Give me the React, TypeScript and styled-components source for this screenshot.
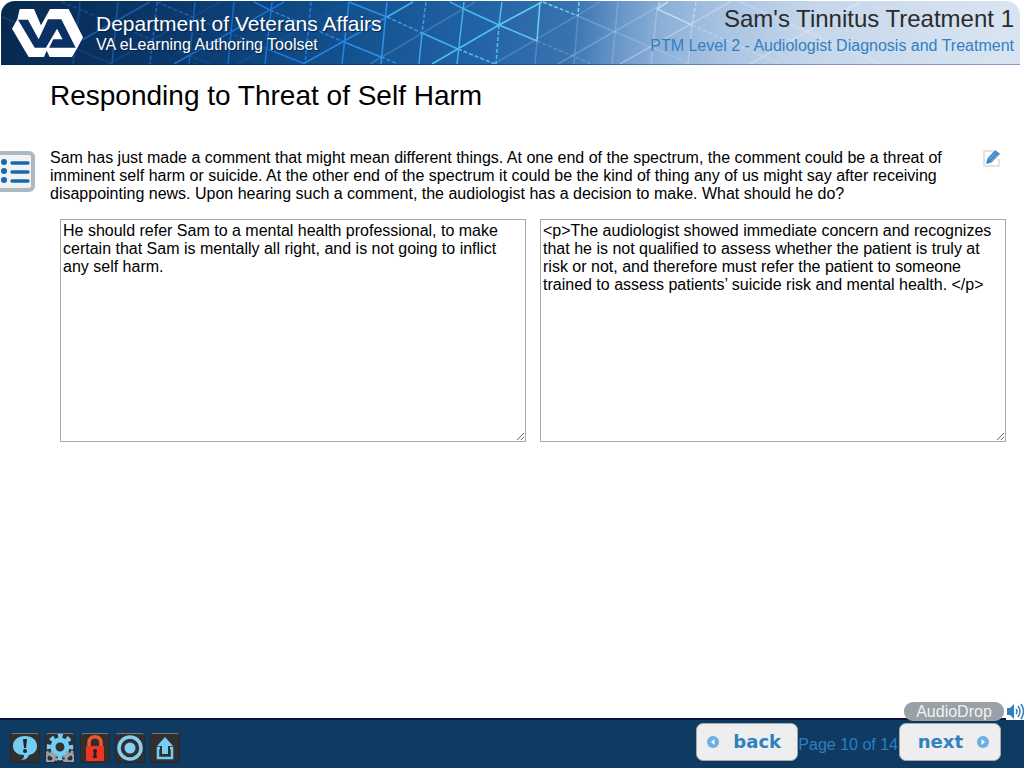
import React from "react";
import styled, { createGlobalStyle } from "styled-components";

const Global = createGlobalStyle`
  *, *::before, *::after { box-sizing: border-box; }
  html, body, #root { height: 100%; }
  body { margin: 0; background: #fff; color: #000; font: 16px/18px "Liberation Sans", Arial, sans-serif; }
  h1, h2, p { margin: 0; font-weight: 400; }
`;

const Page = styled.div`
  min-height: 100%;
  display: flex;
  flex-direction: column;
`;

const Header = styled.header`
  position: relative;
  display: flex;
  align-items: flex-start;
  height: 64px;
  margin: 1px 4px 0 1px;
  overflow: hidden;
  border-radius: 14px 14px 0 0;
  border-bottom: 1px solid rgba(0, 20, 110, 0.35);
  background: linear-gradient(97deg, #07294f 0, #0c3a6e 190px, #12508d 340px, #2263a5 480px, #3972b1 570px, #6b98ca 620px, #8db0d8 660px, #a9c3e2 720px, #c6d7eb 810px, #d8e4f1 1000px);
`;

const Lattice = styled.svg`
  position: absolute;
  top: 0;
  left: 0;
  width: 1019px;
  height: 63px;
`;

const Logo = styled.svg`
  position: relative;
  flex: none;
  width: 72px;
  height: 50px;
  margin: 7px 0 0 11px;
`;

const Brand = styled.div`
  position: relative;
  flex: 1;
  margin: 11px 0 0 12px;
  color: #fff;
  white-space: nowrap;
  text-shadow: 1px 1px 1px #06244a;
`;

const BrandName = styled.div`
  font-size: 21px;
  line-height: 24px;
`;

const BrandSub = styled.div`
  font-size: 16px;
  line-height: 18px;
`;

const Course = styled.div`
  position: relative;
  padding: 5px 6px 0 0;
  text-align: right;
  white-space: nowrap;
`;

const CourseTitle = styled.h1`
  color: #2b2b2b;
  font-size: 24px;
  line-height: 26px;
`;

const CourseLevel = styled.h2`
  color: #337fc0;
  font-size: 16px;
  line-height: 28px;
`;

const Main = styled.main`
  flex: 1;
  display: flex;
  flex-direction: column;
`;

const PageTitle = styled.h2`
  margin: 14px 50px 0;
  font-size: 28px;
  line-height: 34px;
`;

const Prompt = styled.div`
  display: flex;
  align-items: flex-start;
  margin-top: 36px;
`;

const MenuButton = styled.button`
  flex: none;
  width: 35px;
  height: 41px;
  margin: 2px 15px 0 0;
  padding: 0;
  border: 4px solid #adb9c1;
  border-left: 0;
  border-radius: 0 6px 6px 0;
  background: #f2f2f2;
  svg { display: block; }
`;

const PromptText = styled.p`
  flex: 1;
  max-width: 900px;
`;

const EditButton = styled.button`
  flex: none;
  width: 20px;
  height: 20px;
  margin: 0 23px 0 auto;
  padding: 0;
  border: 0;
  background: none;
  svg { display: block; }
`;

const Answers = styled.div`
  display: grid;
  grid-template-columns: 1fr 1fr;
  gap: 14px;
  margin: 16px 18px 0 60px;
`;

const Answer = styled.textarea`
  display: block;
  width: 100%;
  height: 223px;
  padding: 2px;
  border: 1px solid #a9a9a9;
  border-radius: 0;
  outline: 0;
  background: #fff;
  color: #000;
  font: inherit;
`;

const Footer = styled.footer`
  position: relative;
  display: flex;
  justify-content: space-between;
  height: 50px;
  border-top: 2px solid #0a1440;
  background: #0f3a62;
`;

const Tools = styled.div`
  display: flex;
  gap: 5px;
  padding: 13px 0 0 10px;
`;

const Tool = styled.button`
  width: 30px;
  height: 30px;
  padding: 0;
  border: 1px solid #292929;
  border-top-color: #777;
  border-radius: 4px;
  background: #303030;
  svg { display: block; }
`;

const Pager = styled.nav`
  display: flex;
  padding: 3px 23px 0 0;
`;

const NavButton = styled.button<{ $side: "start" | "end" }>`
  display: flex;
  align-items: center;
  justify-content: ${(p) => (p.$side === "start" ? "flex-start" : "flex-end")};
  gap: 14px;
  height: 38px;
  width: 102px;
  padding: 0 11px 0 10px;
  border: 1px solid #a5a9ad;
  border-radius: 7px;
  background: #eee;
  color: #2e80c0;
  font: bold 18px/24px "DejaVu Sans", Verdana, sans-serif;
`;

const PageCount = styled.span`
  padding: 13px 1px 0 0;
  color: #2e7fc1;
  white-space: nowrap;
`;

const Audio = styled.div`
  position: absolute;
  right: 0;
  top: -18px;
  display: flex;
  gap: 2px;
`;

const AudioDrop = styled.button`
  width: 100px;
  height: 19px;
  padding: 0;
  border: 0;
  border-radius: 9px;
  background: #98a1a7;
  color: #f2f2f2;
  font: inherit;
`;

const SpeakerButton = styled.button`
  width: 18px;
  height: 18px;
  padding: 0;
  border: 0;
  background: #fff;
  svg { display: block; }
`;

type Seg = [number, number, number, number, string, number, boolean?];

const segments: Seg[] = [
  [349, 2, 387, 17, "#2f8ee6", 1], [387, 17, 422, 33, "#3a9be8", 1, true],
  [422, 33, 458, 49, "#43b0ee", 1], [458, 49, 495, 64, "#4cbdf0", 1, true],
  [254, 2, 270, 10, "#1d78dd", 1], [270, 10, 344, 42, "#2585e6", 1, true],
  [344, 42, 381, 57, "#2f8ee6", 1], [381, 57, 398, 64, "#2f8ee6", 1, true],
  [450, 2, 464, 9, "#43a6e6", 1], [464, 9, 499, 25, "#4cbdf0", 1],
  [499, 25, 537, 41, "#5bc8f0", 1], [537, 41, 592, 64, "#9cc8e8", 0.35, true],
  [543, 2, 578, 16, "#6fd0ee", 1, true], [578, 16, 690, 64, "#b8d4ee", 0.3],
  [157, 2, 270, 50, "#1a62b8", 0.9, true], [270, 50, 305, 64, "#1d78dd", 1],
  [62, 2, 210, 64, "#154f98", 0.9, true], [2, 17, 112, 64, "#123f7c", 1],
  [303, 64, 387, 17, "#2585e6", 1], [387, 17, 413, 2, "#43b0ee", 1],
  [432, 64, 499, 25, "#4cc4f0", 1], [499, 25, 542, 2, "#5fd2f0", 1],
  [370, 64, 475, 2, "#6a9fd4", 0.4], [494, 64, 600, 2, "#8cb4de", 0.35],
  [174, 64, 284, 2, "#1d70cf", 1], [238, 64, 349, 2, "#1a60b4", 0.4],
  [109, 64, 220, 2, "#17589f", 0.5], [80, 41, 150, 2, "#1862b4", 0.9],
  [558, 64, 666, 2, "#c8dcf0", 0.3], [620, 64, 730, 2, "#dce9f6", 0.4],
  [657, 9, 692, 25, "#b8e2f4", 0.9], [657, 9, 668, 2, "#b8e2f4", 0.9],
  [660, 2, 657, 9, "#b8e2f4", 0.9, true], [696, 2, 692, 25, "#b8e2f4", 0.8, true],
  [692, 25, 780, 64, "#e0ecf8", 0.4, true], [750, 64, 860, 2, "#e8f0f8", 0.4],
  [740, 2, 880, 64, "#e8f0f8", 0.3], [692, 25, 688, 64, "#e0ecf8", 0.3],
  [657, 9, 651, 64, "#e0ecf8", 0.3],
  [80, 2, 73, 64, "#124a8c", 1], [118, 2, 112, 64, "#175aa8", 1],
  [157, 2, 150, 64, "#1a68c0", 1, true], [195, 2, 189, 64, "#1862b4", 1],
  [234, 2, 228, 64, "#1a68c4", 1], [272, 2, 265, 64, "#1d74d6", 1],
  [311, 2, 305, 64, "#1f7ce0", 1, true], [349, 2, 342, 64, "#2585e6", 1],
  [387, 2, 381, 64, "#2f92e8", 1], [426, 2, 422, 33, "#3a9be8", 1, true],
  [422, 33, 419, 64, "#3aa6ec", 1], [464, 2, 457, 64, "#43b0ee", 1],
  [502, 2, 499, 25, "#4cc0f0", 1], [499, 25, 496, 64, "#4cc0f0", 1, true],
  [540, 2, 537, 41, "#66d4ee", 1], [537, 41, 535, 64, "#9cc8e8", 0.3],
  [579, 2, 578, 16, "#7ad8ee", 1, true], [578, 16, 574, 64, "#9cc8e8", 0.3],
  [618, 2, 612, 64, "#b8d4ee", 0.3],
];

const Arrow = ({ left }: { left?: boolean }) => (
  <svg width="12" height="12" viewBox="0 0 12 12" aria-hidden="true">
    <circle cx="6" cy="6" r="6" fill="#68b0e2" />
    <path d={left ? "M7.5 3v6L4 6z" : "M4.5 3v6L8 6z"} fill="#fff" />
  </svg>
);

export default function App() {
  return (
    <Page>
      <Global />
      <Header>
        <Lattice viewBox="1 1 1019 63" aria-hidden="true">
          {segments.map(([x1, y1, x2, y2, c, o, dash], i) => (
            <line key={i} x1={x1} y1={y1} x2={x2} y2={y2} stroke={c} strokeOpacity={o} strokeWidth={1.5} strokeDasharray={dash ? "4 2" : undefined} />
          ))}
        </Lattice>
        <Logo viewBox="12 12 216 150" role="img" aria-label="VA">
          <path fill="#fff" d="M35 15H78L99 64L126 15H182L225 100L208 132L192 159H125L116 140L108 159H62L12 74L28 46Z" />
          <path fill="#0b3164" d="M30 47H60L92 106L120 46H160L203 131H80Z" />
          <path fill="#fff" d="M147 74L164 106H136L122 134H112Z" />
        </Logo>
        <Brand>
          <BrandName>Department of Veterans Affairs</BrandName>
          <BrandSub>VA eLearning Authoring Toolset</BrandSub>
        </Brand>
        <Course>
          <CourseTitle>Sam's Tinnitus Treatment 1</CourseTitle>
          <CourseLevel>PTM Level 2 - Audiologist Diagnosis and Treatment</CourseLevel>
        </Course>
      </Header>
      <Main>
        <PageTitle>Responding to Threat of Self Harm</PageTitle>
        <Prompt>
          <MenuButton aria-label="Contents">
            <svg width="31" height="33" viewBox="0 0 31 33">
              <g fill="#1668b0"><circle cx="4" cy="7" r="3" /><circle cx="4" cy="16" r="3" /><circle cx="4" cy="25" r="3" /></g>
              <path d="M12 8H28M12 17H28M12 26H28" stroke="#1668b0" strokeWidth="3.4" strokeLinecap="round" />
            </svg>
          </MenuButton>
          <PromptText>
            Sam has just made a comment that might mean different things. At one end of the spectrum, the comment could be a threat of imminent self harm or suicide. At the other end of the spectrum it could be the kind of thing any of us might say after receiving disappointing news. Upon hearing such a comment, the audiologist has a decision to make. What should he do?
          </PromptText>
          <EditButton aria-label="Edit">
            <svg width="20" height="20" viewBox="0 0 20 20">
              <path d="M12 2H3V17H18V10" fill="none" stroke="#dcdcdc" strokeWidth="1.6" />
              <path d="M5 15L6.500 9.500L14 1L19 5L10.500 13.500Z" fill="#3b86c4" />
              <path d="M8 10.500L15 3.500M10 12.500L17 5.500" stroke="#a5cdea" strokeWidth="0.8" />
            </svg>
          </EditButton>
        </Prompt>
        <Answers>
          <Answer aria-label="Your response" spellCheck={false} defaultValue="He should refer Sam to a mental health professional, to make certain that Sam is mentally all right, and is not going to inflict any self harm." />
          <Answer aria-label="Feedback" spellCheck={false} defaultValue="<p>The audiologist showed immediate concern and recognizes that he is not qualified to assess whether the patient is truly at risk or not, and therefore must refer the patient to someone trained to assess patients’ suicide risk and mental health. </p>" />
        </Answers>
      </Main>
      <Footer>
        <Tools>
          <Tool aria-label="Comments">
            <svg width="28" height="28" viewBox="0 0 28 28">
              <path d="M14 2C7 2 2 6 2 12C2 18 7 21 13 21C13 24 12 25 10 26C16 26 17 23 18 21C23 20 26 17 26 12C26 6 21 2 14 2Z" fill="#74cdf2" />
              <path d="M12 5H16L15 14H13Z" fill="#222" /><circle cx="14" cy="17" r="2" fill="#222" />
            </svg>
          </Tool>
          <Tool aria-label="Settings">
            <svg width="28" height="28" viewBox="0 0 28 28">
              <circle cx="14" cy="13" r="7" fill="none" stroke="#74cdf2" strokeWidth="5" />
              <circle cx="14" cy="13" r="11" fill="none" stroke="#74cdf2" strokeWidth="4.500" strokeDasharray="4.640 4" strokeDashoffset="2.320" />
              <g stroke="#9aa0a5" fill="none">
                <circle cx="4" cy="24" r="4" strokeWidth="3" /><circle cx="24" cy="24" r="4" strokeWidth="3" />
                <circle cx="4" cy="24" r="6" strokeWidth="3" strokeDasharray="2.700 2.010" /><circle cx="24" cy="24" r="6" strokeWidth="3" strokeDasharray="2.700 2.010" />
              </g>
            </svg>
          </Tool>
          <Tool aria-label="Lock">
            <svg width="28" height="28" viewBox="0 0 28 28">
              <path d="M8 13V8C8 1 20 1 20 8V13" fill="none" stroke="#f2572a" strokeWidth="3.500" />
              <rect x="5" y="12" width="18" height="15" rx="1" fill="#ee3524" />
              <circle cx="14" cy="17" r="2" fill="#222" /><path d="M13 17h2l1 7h-4z" fill="#222" />
            </svg>
          </Tool>
          <Tool aria-label="Target">
            <svg width="28" height="28" viewBox="0 0 28 28">
              <circle cx="14" cy="14" r="11" fill="none" stroke="#84cff2" strokeWidth="3.500" /><circle cx="14" cy="14" r="5.500" fill="#84cff2" />
            </svg>
          </Tool>
          <Tool aria-label="Upload">
            <svg width="28" height="28" viewBox="0 0 28 28">
              <path d="M14 3L22 12H17V20H11V12H6Z" fill="#74cdf2" />
              <path d="M9 14H7V24H21V14H19" fill="none" stroke="#74cdf2" strokeWidth="2.500" />
            </svg>
          </Tool>
        </Tools>
        <Pager aria-label="Pages">
          <NavButton $side="start"><Arrow left />back</NavButton>
          <PageCount>Page 10 of 14</PageCount>
          <NavButton $side="end">next<Arrow /></NavButton>
        </Pager>
        <Audio>
          <AudioDrop>AudioDrop</AudioDrop>
          <SpeakerButton aria-label="Play audio">
            <svg width="18" height="18" viewBox="0 0 18 18">
              <path d="M1 6H4L8 2V17L4 13H1Z" fill="#2e7fc1" />
              <path d="M10 7Q12 9 10 12M12 4Q16 9 12 15M15 2Q20 9 15 17" fill="none" stroke="#2e7fc1" strokeWidth="1.500" />
            </svg>
          </SpeakerButton>
        </Audio>
      </Footer>
    </Page>
  );
}
